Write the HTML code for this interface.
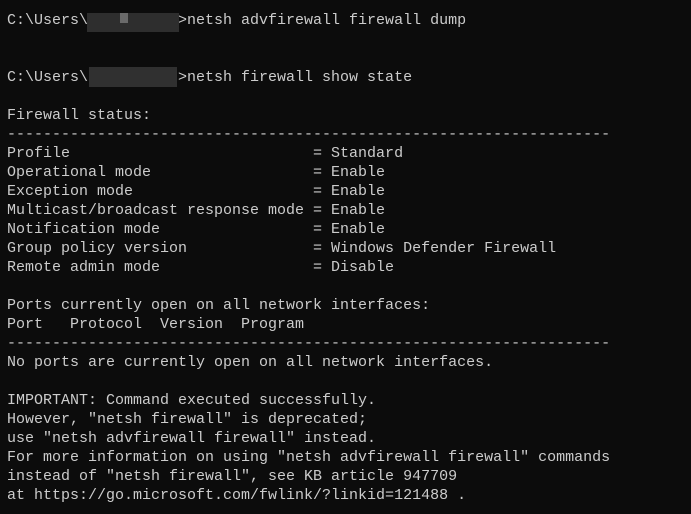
<!DOCTYPE html>
<html><head><style>
html,body{margin:0;padding:0;background:#0c0c0c;width:691px;height:514px;overflow:hidden}
pre{margin:0;position:absolute;left:7px;top:11px;font-family:"Liberation Mono",monospace;font-size:15px;line-height:19px;color:#cccccc}
.b{position:absolute;background:#3a3a3a}
</style></head><body>
<pre>C:\Users\          &gt;netsh advfirewall firewall dump


C:\Users\          &gt;netsh firewall show state

Firewall status:
-------------------------------------------------------------------
Profile                           = Standard
Operational mode                  = Enable
Exception mode                    = Enable
Multicast/broadcast response mode = Enable
Notification mode                 = Enable
Group policy version              = Windows Defender Firewall
Remote admin mode                 = Disable

Ports currently open on all network interfaces:
Port   Protocol  Version  Program
-------------------------------------------------------------------
No ports are currently open on all network interfaces.

IMPORTANT: Command executed successfully.
However, "netsh firewall" is deprecated;
use "netsh advfirewall firewall" instead.
For more information on using "netsh advfirewall firewall" commands
instead of "netsh firewall", see KB article 947709
at https://go.microsoft.com/fwlink/?linkid=121488 .</pre>
<div class="b" style="left:87px;top:13px;width:92px;height:19px;background:#2e2e2e"></div>
<div class="b" style="left:120px;top:13px;width:8px;height:10px;background:#6a6a6a"></div>
<div class="b" style="left:89px;top:67px;width:88px;height:20px;background:#303030"></div>
</body></html>
